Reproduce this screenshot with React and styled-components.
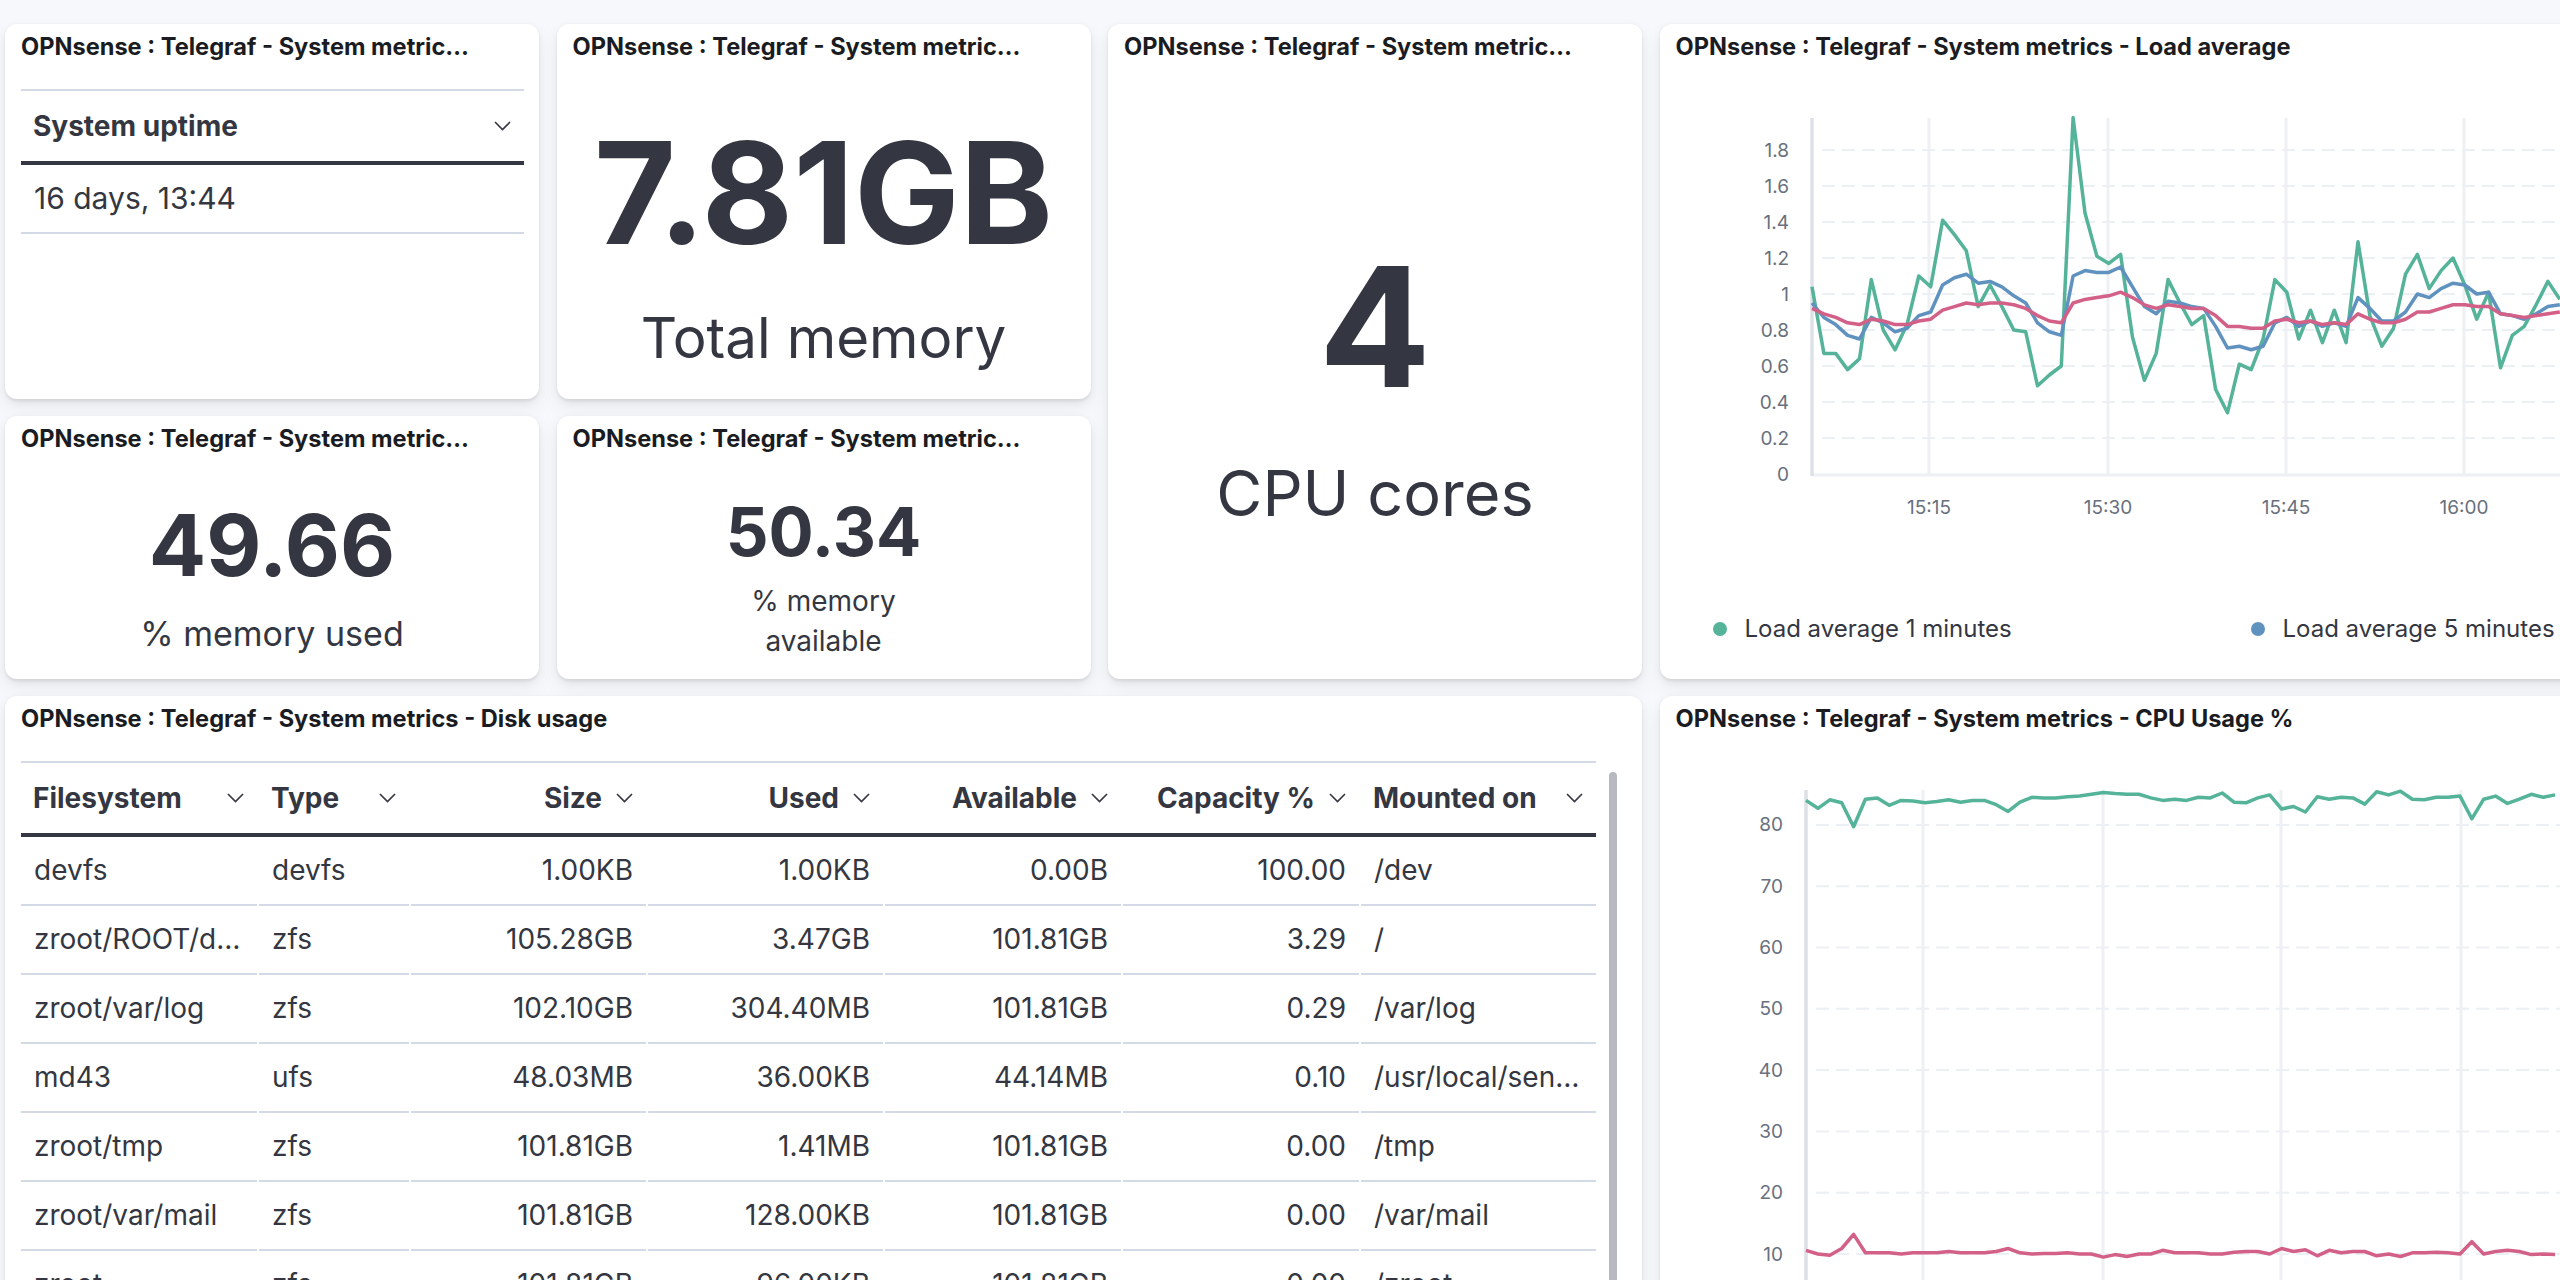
import React from 'react';
import styled, { createGlobalStyle } from 'styled-components';

const GlobalStyle = createGlobalStyle`
  html, body {
    margin: 0;
    padding: 0;
    background: #f7f8fc;
    overflow: hidden;
  }
  body {
    font-family: Inter, "Noto Sans", sans-serif;
    color: #343741;
  }
`;

const Dashboard = styled.div`
  display: grid;
  grid-template-columns: repeat(5, 534px);
  grid-template-rows: 375px 263px 640px;
  column-gap: 17.5px;
  row-gap: 17px;
  padding: 24px 0 0 5px;
  width: max-content;
`;

const Panel = styled.section`
  grid-column: ${p => p.col};
  grid-row: ${p => p.row};
  display: flex;
  flex-direction: column;
  min-width: 0;
  padding-top: 5px;
  background: #fff;
  border-radius: 12px;
  overflow: hidden;
  box-shadow: 0 1.4px 2.8px rgba(0, 0, 0, 0.07), 0 3.8px 8px rgba(0, 0, 0, 0.05), 0 9px 20px rgba(0, 0, 0, 0.05);
`;

const PanelTitle = styled.h2`
  flex: none;
  margin: 0;
  padding: 0 16px;
  font-size: 23.6px;
  line-height: 36px;
  font-weight: 700;
  color: #1a1c21;
  white-space: nowrap;
  overflow: hidden;
`;

/* ---------- metric panels ---------- */

const MetricBody = styled.div`
  flex: 1;
  display: flex;
  flex-direction: column;
  align-items: center;
  padding-top: ${p => p.top}px;
  text-align: center;
  color: #343741;
`;

const MetricValue = styled.div`
  font-size: ${p => p.size}px;
  line-height: 1;
  font-weight: 700;
`;

const MetricLabel = styled.div`
  max-width: ${p => p.wrap || 'none'};
  margin-top: ${p => p.gap}px;
  font-size: ${p => p.size}px;
  line-height: ${p => p.lh}px;
`;

/* ---------- tables ---------- */

const TableWrap = styled.div`
  flex: none;
  display: flex;
  align-items: flex-start;
  padding: 24px 15px 0 16px;
`;

const Table = styled.div`
  width: ${p => p.width || '100%'};
  flex: none;
  border-top: 2px solid #d3dae6;
  font-size: 28px;
  line-height: 42px;
  color: #343741;
`;

const HeadRow = styled.div`
  display: grid;
  grid-template-columns: ${p => p.cols};
  column-gap: 2px;
  border-bottom: 4px solid #343741;
`;

const HeadCell = styled.div`
  display: flex;
  align-items: center;
  justify-content: ${p => (p.numeric ? 'flex-end' : 'space-between')};
  gap: 14px;
  padding: 14px 13px 14px 12px;
  font-weight: 700;
  white-space: nowrap;
`;

const BodyRow = styled.div`
  display: grid;
  grid-template-columns: ${p => p.cols};
  column-gap: 2px;
`;

const Cell = styled.div`
  padding: 12px 13px 13px 13px;
  border-bottom: 2px solid #d3dae6;
  font-size: ${p => p.size || 28}px;
  text-align: ${p => (p.numeric ? 'right' : 'left')};
  white-space: nowrap;
  overflow: hidden;
  text-overflow: ellipsis;
`;

const ScrollThumb = styled.div`
  width: 8px;
  height: 700px;
  margin: 11px 0 0 13px;
  border-radius: 4px 4px 0 0;
  background: #b6b9c0;
  flex: none;
`;

const Chevron = () => (
  <svg width="17" height="10" viewBox="0 0 17 10" style={{ flex: 'none' }}>
    <polyline points="1,1 8.5,8.5 16,1" fill="none" stroke="#343741" strokeWidth="1.6" />
  </svg>
);

/* ---------- charts ---------- */

const Legend = styled.div`
  flex: none;
  display: grid;
  grid-template-columns: repeat(3, 538px);
  padding-left: 53px;
  margin-top: ${p => p.top}px;
`;

const LegendItem = styled.div`
  display: flex;
  align-items: center;
  gap: 18px;
  font-size: 24px;
  line-height: 36px;
  color: #343741;
  white-space: nowrap;
`;

const Dot = styled.span`
  flex: none;
  width: 14px;
  height: 14px;
  border-radius: 50%;
  background: ${p => p.color};
`;

const GREEN = '#54b399';
const BLUE = '#6092c0';
const PINK = '#d36086';

const LineChart = ({ width, height, axisX, axisTop, zeroY, unit, ticks, fmt, labelRight, gridXs, xLabels, labelY, step, series }) => {
  const y = v => zeroY - v * unit;
  return (
    <svg width={width} height={height} style={{ display: 'block', flex: 'none' }}>
      {ticks.filter(t => t > 0).map(t => (
        <line key={'h' + t} x1={axisX + 10} x2={width} y1={y(t)} y2={y(t)} stroke="#eceff4" strokeWidth="2" strokeDasharray="13 7" />
      ))}
      {gridXs.map(x => (
        <line key={'v' + x} x1={x} x2={x} y1={axisTop} y2={zeroY} stroke="#eef0f4" strokeWidth="3" />
      ))}
      <line x1={axisX} x2={width} y1={zeroY + 1} y2={zeroY + 1} stroke="#eef0f4" strokeWidth="3" />
      <line x1={axisX} x2={axisX} y1={axisTop} y2={zeroY + 2} stroke="#dde1e7" strokeWidth="3.5" />
      {ticks.map(t => (
        <text key={'t' + t} x={labelRight} y={y(t)} textAnchor="end" dominantBaseline="central" fontFamily="Inter, sans-serif" fontSize="19" fill="#69707d">
          {fmt(t)}
        </text>
      ))}
      {xLabels.map((l, i) => (
        <text key={l} x={gridXs[i]} y={labelY} textAnchor="middle" dominantBaseline="central" fontFamily="Inter, sans-serif" fontSize="19" fill="#69707d">
          {l}
        </text>
      ))}
      {series.map(s => (
        <polyline
          key={s.color}
          points={s.data.map((v, i) => `${(axisX + i * step).toFixed(1)},${y(v).toFixed(1)}`).join(' ')}
          fill="none"
          stroke={s.color}
          strokeWidth="3.5"
          strokeLinejoin="round"
        />
      ))}
    </svg>
  );
};

const load1 = [1.04, 0.67, 0.67, 0.58, 0.64, 1.08, 0.8, 0.69, 0.83, 1.1, 1.04, 1.41, 1.33, 1.24, 0.93, 1.05, 0.93, 0.8, 0.79, 0.49, 0.55, 0.6, 1.98, 1.45, 1.21, 1.17, 1.22, 0.76, 0.52, 0.67, 1.08, 0.95, 0.83, 0.88, 0.47, 0.34, 0.61, 0.58, 0.75, 1.08, 1.01, 0.75, 0.91, 0.73, 0.91, 0.73, 1.29, 0.88, 0.71, 0.81, 1.11, 1.22, 1.03, 1.13, 1.2, 1.05, 0.86, 1.01, 0.59, 0.77, 0.82, 0.94, 1.07, 0.97];
const load5 = [0.95, 0.87, 0.83, 0.77, 0.75, 0.87, 0.84, 0.79, 0.81, 0.88, 0.9, 1.05, 1.09, 1.11, 1.06, 1.07, 1.04, 0.99, 0.95, 0.84, 0.79, 0.77, 1.1, 1.13, 1.12, 1.12, 1.15, 1.04, 0.93, 0.89, 0.96, 0.95, 0.93, 0.92, 0.82, 0.7, 0.71, 0.69, 0.71, 0.84, 0.87, 0.82, 0.85, 0.82, 0.84, 0.82, 0.98, 0.92, 0.85, 0.85, 0.9, 1.0, 0.98, 1.03, 1.06, 1.05, 1.0, 1.01, 0.89, 0.88, 0.86, 0.89, 0.93, 0.94];
const load15 = [0.92, 0.89, 0.87, 0.84, 0.83, 0.86, 0.85, 0.83, 0.83, 0.85, 0.86, 0.91, 0.93, 0.95, 0.94, 0.95, 0.95, 0.94, 0.92, 0.88, 0.85, 0.84, 0.95, 0.97, 0.98, 0.99, 1.01, 0.98, 0.94, 0.92, 0.94, 0.93, 0.92, 0.92, 0.88, 0.82, 0.82, 0.81, 0.81, 0.85, 0.86, 0.84, 0.85, 0.83, 0.84, 0.83, 0.89, 0.86, 0.84, 0.84, 0.86, 0.9, 0.9, 0.92, 0.94, 0.94, 0.93, 0.93, 0.89, 0.88, 0.87, 0.88, 0.89, 0.9];

const cpuUser = [84.0, 82.7, 84.1, 83.6, 79.7, 84.2, 84.4, 83.2, 84.0, 83.9, 83.6, 83.8, 84.1, 83.7, 84.0, 84.0, 83.3, 82.2, 83.7, 84.5, 84.4, 84.4, 84.6, 84.7, 85.0, 85.3, 85.1, 85.0, 85.0, 84.4, 84.0, 84.2, 84.0, 84.5, 84.4, 85.2, 83.7, 83.6, 84.4, 84.9, 82.6, 83.0, 82.1, 84.6, 84.2, 84.5, 84.4, 83.4, 85.4, 84.9, 85.5, 84.2, 84.1, 84.5, 84.5, 84.7, 81.0, 84.2, 84.7, 83.5, 84.2, 85.0, 84.5, 84.9];
const cpuSys = [10.6, 10.0, 9.8, 10.9, 13.2, 10.2, 10.2, 10.2, 10.0, 10.2, 10.2, 10.2, 10.4, 10.2, 10.2, 10.2, 10.4, 10.9, 10.2, 10.0, 10.1, 10.1, 10.2, 10.0, 10.0, 9.5, 9.9, 9.6, 10.0, 10.0, 10.6, 10.2, 10.2, 10.2, 10.0, 10.0, 10.3, 10.4, 10.4, 10.0, 10.9, 10.4, 10.7, 9.7, 10.6, 10.2, 10.4, 10.4, 9.7, 10.0, 9.6, 10.2, 10.2, 10.3, 10.2, 10.0, 12.0, 10.0, 10.4, 10.6, 10.4, 9.9, 10.0, 9.9];

const DISK_COLS = '236px 150px 235px 235px 236px 236px 235px';

const diskHead = [
  { label: 'Filesystem' },
  { label: 'Type' },
  { label: 'Size', numeric: true },
  { label: 'Used', numeric: true },
  { label: 'Available', numeric: true },
  { label: 'Capacity %', numeric: true },
  { label: 'Mounted on' },
];

const diskRows = [
  ['devfs', 'devfs', '1.00KB', '1.00KB', '0.00B', '100.00', '/dev'],
  ['zroot/ROOT/default', 'zfs', '105.28GB', '3.47GB', '101.81GB', '3.29', '/'],
  ['zroot/var/log', 'zfs', '102.10GB', '304.40MB', '101.81GB', '0.29', '/var/log'],
  ['md43', 'ufs', '48.03MB', '36.00KB', '44.14MB', '0.10', '/usr/local/sensei/output'],
  ['zroot/tmp', 'zfs', '101.81GB', '1.41MB', '101.81GB', '0.00', '/tmp'],
  ['zroot/var/mail', 'zfs', '101.81GB', '128.00KB', '101.81GB', '0.00', '/var/mail'],
  ['zroot', 'zfs', '101.81GB', '96.00KB', '101.81GB', '0.00', '/zroot'],
];

const SHORT = 'OPNsense : Telegraf - System metric…';
const fmtLoad = v => (v === 0 ? '0' : v === 1 ? '1' : v.toFixed(1));

export default function App() {
  return (
    <>
      <GlobalStyle />
      <Dashboard>
        <Panel col="1" row="1">
          <PanelTitle>{SHORT}</PanelTitle>
          <TableWrap>
            <Table>
              <HeadRow cols="1fr">
                <HeadCell>System uptime<Chevron /></HeadCell>
              </HeadRow>
              <BodyRow cols="1fr">
                <Cell size={30}>16 days, 13:44</Cell>
              </BodyRow>
            </Table>
          </TableWrap>
        </Panel>

        <Panel col="2" row="1">
          <PanelTitle>{SHORT}</PanelTitle>
          <MetricBody top={56.5}>
            <MetricValue size={141}>7.81GB</MetricValue>
            <MetricLabel gap={41} size={56.5} lh={68}>Total memory</MetricLabel>
          </MetricBody>
        </Panel>

        <Panel col="3" row="1 / span 2">
          <PanelTitle>{SHORT}</PanelTitle>
          <MetricBody top={178.6}>
            <MetricValue size={166}>4</MetricValue>
            <MetricLabel gap={46.7} size={63} lh={75.6}>CPU cores</MetricLabel>
          </MetricBody>
        </Panel>

        <Panel col="4 / span 2" row="1 / span 2">
          <PanelTitle>OPNsense : Telegraf - System metrics - Load average</PanelTitle>
          <LineChart
            width={1086}
            height={470}
            axisX={152}
            axisTop={53}
            zeroY={409}
            unit={180}
            ticks={[0, 0.2, 0.4, 0.6, 0.8, 1, 1.2, 1.4, 1.6, 1.8]}
            fmt={fmtLoad}
            labelRight={129}
            gridXs={[269, 448, 626, 804, 983]}
            xLabels={['15:15', '15:30', '15:45', '16:00', '16:15']}
            labelY={442}
            step={11.87}
            series={[
              { color: GREEN, data: load1 },
              { color: BLUE, data: load5 },
              { color: PINK, data: load15 },
            ]}
          />
          <Legend top={76}>
            <LegendItem><Dot color={GREEN} />Load average 1 minutes</LegendItem>
            <LegendItem><Dot color={BLUE} />Load average 5 minutes</LegendItem>
            <LegendItem><Dot color={PINK} />Load average 15 minutes</LegendItem>
          </Legend>
        </Panel>

        <Panel col="1" row="2">
          <PanelTitle>{SHORT}</PanelTitle>
          <MetricBody top={46}>
            <MetricValue size={85}>49.66</MetricValue>
            <MetricLabel gap={25} size={34} lh={41}>% memory used</MetricLabel>
          </MetricBody>
        </Panel>

        <Panel col="2" row="2">
          <PanelTitle>{SHORT}</PanelTitle>
          <MetricBody top={40.5}>
            <MetricValue size={67}>50.34</MetricValue>
            <MetricLabel gap={16.4} size={28} lh={40} wrap="200px">% memory available</MetricLabel>
          </MetricBody>
        </Panel>

        <Panel col="1 / span 3" row="3">
          <PanelTitle>OPNsense : Telegraf - System metrics - Disk usage</PanelTitle>
          <TableWrap>
            <Table width="1575px">
              <HeadRow cols={DISK_COLS}>
                {diskHead.map(h => (
                  <HeadCell key={h.label} numeric={h.numeric}>
                    {h.label}
                    <Chevron />
                  </HeadCell>
                ))}
              </HeadRow>
              {diskRows.map(r => (
                <BodyRow key={r[0]} cols={DISK_COLS}>
                  {r.map((v, i) => (
                    <Cell key={i} numeric={diskHead[i].numeric}>{v}</Cell>
                  ))}
                </BodyRow>
              ))}
            </Table>
            <ScrollThumb />
          </TableWrap>
        </Panel>

        <Panel col="4 / span 2" row="3">
          <PanelTitle>OPNsense : Telegraf - System metrics - CPU Usage %</PanelTitle>
          <LineChart
            width={1086}
            height={600}
            axisX={146}
            axisTop={53}
            zeroY={578.3}
            unit={6.13}
            ticks={[0, 10, 20, 30, 40, 50, 60, 70, 80]}
            fmt={v => String(v)}
            labelRight={123}
            gridXs={[263, 443, 621, 801, 980]}
            xLabels={[]}
            labelY={0}
            step={11.89}
            series={[
              { color: GREEN, data: cpuUser },
              { color: PINK, data: cpuSys },
            ]}
          />
        </Panel>
      </Dashboard>
    </>
  );
}
